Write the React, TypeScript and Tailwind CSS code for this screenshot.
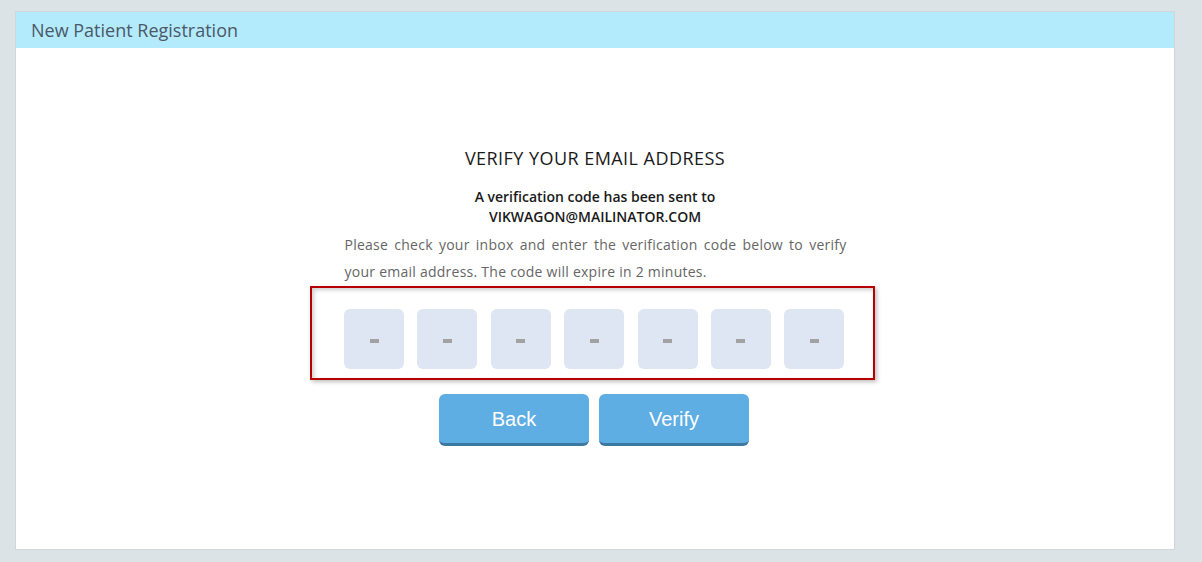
import React from "react";

export default function App() {
  const boxes = [0, 1, 2, 3, 4, 5, 6];
  return (
    <div className="w-[1202px] h-[562px] bg-[#dce3e6] pt-[11px] pl-[15px]" style={{ fontFamily: '"Open Sans", sans-serif' }}>
      <div className="w-[1160px] h-[539px] bg-white border border-[#d3d6d8] flex flex-col">
        <div className="h-[36px] bg-[#b3ebfd] flex items-center pl-[15px] text-[18px] text-[#4b5866]">
          New Patient Registration
        </div>
        <div className="flex flex-col items-center pt-[98px]">
          <div className="text-[18px] text-[#1a1a1a] leading-[24px] font-medium tracking-[0.45px]">VERIFY YOUR EMAIL ADDRESS</div>
          <div className="mt-[17px] text-[14px] font-semibold text-[#1a1a1a] leading-[20px] text-center">
            A verification code has been sent to
            <br />
            VIKWAGON@MAILINATOR.COM
          </div>
          <p className="w-[502px] mt-[4px] text-[14px] text-[#666] leading-[27px] tracking-[0.25px] ml-[1px]" style={{ textAlign: "justify" }}>
            Please check your inbox and enter the verification code below to verify your email address. The code will expire in 2 minutes.
          </p>
          <div className="mt-[1px] w-[565px] h-[94px] border-2 border-[#b80000] flex items-start pt-[21px] pl-[32px] gap-[13.4px] shadow-[inset_2px_2px_4px_rgba(0,0,0,0.2),2px_2px_4px_rgba(0,0,0,0.25)] ml-[-5px]">
            {boxes.map((b) => (
              <div key={b} className="w-[60px] h-[60px] rounded-[6px] bg-[#dde6f2] flex items-center justify-center">
                <div className="w-[9px] h-[4px] bg-[#a2a2a2] mt-[4px]" />
              </div>
            ))}
          </div>
          <div className="mt-[14px] flex gap-[10px] ml-[-2px]" style={{ fontFamily: '"Liberation Sans", Arial, sans-serif' }}>
            <button className="w-[150px] h-[52px] rounded-[6px] bg-[#5eade3] border-b-[3px] border-[#3d78a3] text-white text-[20px]">
              Back
            </button>
            <button className="w-[150px] h-[52px] rounded-[6px] bg-[#5eade3] border-b-[3px] border-[#3d78a3] text-white text-[20px]">
              Verify
            </button>
          </div>
        </div>
      </div>
    </div>
  );
}
